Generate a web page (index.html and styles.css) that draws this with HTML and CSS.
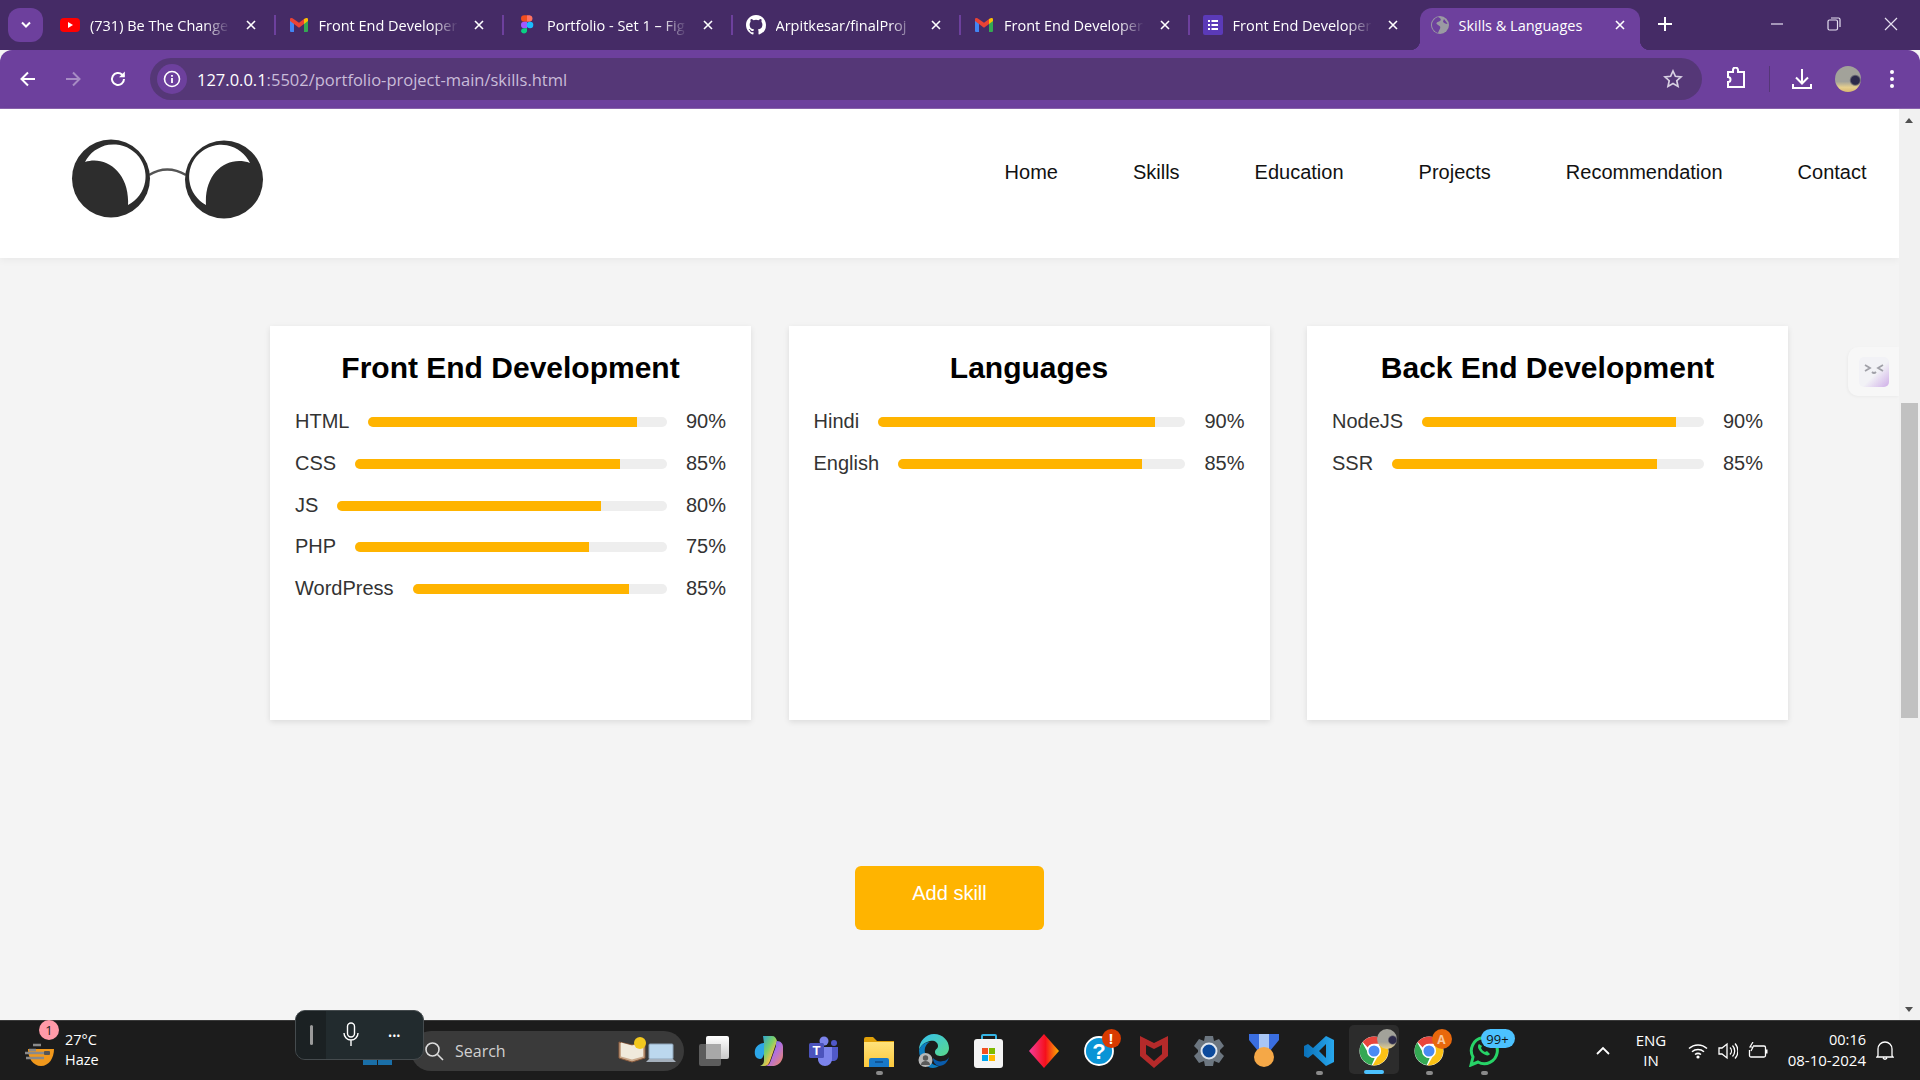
FILE: index.html
```html
<!DOCTYPE html>
<html lang="en">
<head>
    <meta charset="UTF-8">
    <meta name="viewport" content="width=device-width, initial-scale=1.0">
    <title>Skills &amp; Languages</title>
    <link rel="stylesheet" href="styles.css">
</head>
<body>
    <!-- shared icons -->
    <svg class="icon-defs" aria-hidden="true">
        <defs>
            <linearGradient id="grad-diamond" x1="0" y1="0" x2="1" y2="0">
                <stop offset="0" stop-color="#f53c9c"/>
                <stop offset="0.55" stop-color="#f5101c"/>
                <stop offset="1" stop-color="#fbb000"/>
            </linearGradient>
            <linearGradient id="grad-copilot" x1="0" y1="0" x2="1" y2="1">
                <stop offset="0" stop-color="#1c9be8"/>
                <stop offset="0.45" stop-color="#7ad06a"/>
                <stop offset="0.7" stop-color="#f5c24a"/>
                <stop offset="1" stop-color="#ee5a8e"/>
            </linearGradient>
            <linearGradient id="grad-copilot2" x1="0" y1="0" x2="1" y2="1">
                <stop offset="0" stop-color="#2e7ee0"/>
                <stop offset="0.5" stop-color="#b070e0"/>
                <stop offset="1" stop-color="#f58a5a"/>
            </linearGradient>
            <linearGradient id="grad-edge" x1="0" y1="0" x2="1" y2="1">
                <stop offset="0" stop-color="#35c1f1"/>
                <stop offset="1" stop-color="#5ad88a"/>
            </linearGradient>
            <linearGradient id="grad-front" x1="0" y1="0" x2="0" y2="1">
                <stop offset="0" stop-color="#ffffff"/>
                <stop offset="1" stop-color="#c9c9c9"/>
            </linearGradient>
            <linearGradient id="grad-folder" x1="0" y1="0" x2="0" y2="1">
                <stop offset="0" stop-color="#ffe27a"/>
                <stop offset="1" stop-color="#fcc83c"/>
            </linearGradient>
            <linearGradient id="grad-vscode" x1="0" y1="0" x2="1" y2="0">
                <stop offset="0" stop-color="#0a70b8"/>
                <stop offset="1" stop-color="#28a8ee"/>
            </linearGradient>
            <symbol id="i-close" viewBox="0 0 12 12">
                <path d="M2 2l8 8M10 2l-8 8" fill="none" stroke="#fff" stroke-width="1.6"/>
            </symbol>
            <symbol id="i-gmail" viewBox="0 0 20 16">
                <path d="M1 15V3l4 3v9H2a1 1 0 0 1-1-1z" fill="#4285f4"/>
                <path d="M19 15V3l-4 3v9h3a1 1 0 0 0 1-1z" fill="#34a853"/>
                <path d="M15 2v5l4-3V2.5a1.5 1.5 0 0 0-2.5-1.2z" fill="#fbbc04"/>
                <path d="M1 2.5V4l4 3 5 3.7L15 7V2l-5 3.7L3.5 1.3A1.5 1.5 0 0 0 1 2.5z" fill="#ea4335"/>
            </symbol>
            <symbol id="i-chrome" viewBox="0 0 32 32">
                <circle cx="16" cy="16" r="15.5" fill="#fff"/>
                <path d="M16 .5a15.5 15.5 0 0 1 13.4 7.75H16a7.75 7.75 0 0 0-6.7 3.9L3.9 6.5A15.5 15.5 0 0 1 16 .5z" fill="#e8453c"/>
                <path d="M3.4 7l6.7 11.6a7.75 7.75 0 0 0 6.6 5.1L13.5 31A15.5 15.5 0 0 1 3.4 7z" fill="#34a853"/>
                <path d="M29.8 9.5A15.5 15.5 0 0 1 14.5 31.4l6.7-11.6a7.75 7.75 0 0 0 .1-10.3z" fill="#fbc116"/>
                <circle cx="16" cy="16" r="6.7" fill="#4a8af4" stroke="#fff" stroke-width="1.6"/>
            </symbol>
        </defs>
    </svg>

    <div class="tab-strip">
        <button class="tab-search">
            <svg width="12" height="8" viewBox="0 0 12 8"><path d="M2 1.5l4 4 4-4" fill="none" stroke="#fff" stroke-width="2"/></svg>
        </button>

        <div class="tab">
            <svg class="favicon" width="20" height="20" viewBox="0 0 20 20"><rect y="3" width="20" height="14" rx="4" fill="#f00"/><path d="M8 7l5 3-5 3z" fill="#fff"/></svg>
            <span class="tab-title">(731) Be The Change</span>
            <svg class="tab-close"><use href="#i-close"/></svg>
        </div>
        <div class="tab">
            <svg class="favicon" width="20" height="20"><use href="#i-gmail"/></svg>
            <span class="tab-title">Front End Developer</span>
            <svg class="tab-close"><use href="#i-close"/></svg>
        </div>
        <div class="tab">
            <svg class="favicon" width="20" height="20" viewBox="0 0 14 20">
                <path d="M1 3.5A3.3 3.3 0 0 1 4.3.2H7v6.5H4.3A3.3 3.3 0 0 1 1 3.5z" fill="#f24e1e"/>
                <path d="M7 .2h2.7a3.3 3.3 0 0 1 0 6.5H7z" fill="#ff7262"/>
                <path d="M1 10A3.3 3.3 0 0 1 4.3 6.7H7v6.6H4.3A3.3 3.3 0 0 1 1 10z" fill="#a259ff"/>
                <circle cx="10" cy="10" r="3.3" fill="#1abcfe"/>
                <path d="M1 16.5a3.3 3.3 0 0 1 3.3-3.2H7v3.2a3.3 3.3 0 0 1-6 0z" fill="#0acf83"/>
            </svg>
            <span class="tab-title">Portfolio - Set 1 – Fig</span>
            <svg class="tab-close"><use href="#i-close"/></svg>
        </div>
        <div class="tab">
            <svg class="favicon" width="20" height="20" viewBox="0 0 16 16"><path fill="#fff" d="M8 0C3.58 0 0 3.58 0 8c0 3.54 2.29 6.53 5.47 7.59.4.07.55-.17.55-.38 0-.19-.01-.82-.01-1.49-2.01.37-2.53-.49-2.69-.94-.09-.23-.48-.94-.82-1.13-.28-.15-.68-.52-.01-.53.63-.01 1.08.58 1.23.82.72 1.21 1.87.87 2.33.66.07-.52.28-.87.51-1.07-1.78-.2-3.64-.89-3.64-3.95 0-.87.31-1.59.82-2.15-.08-.2-.36-1.02.08-2.12 0 0 .67-.21 2.2.82a7.42 7.42 0 0 1 4 0c1.53-1.04 2.2-.82 2.2-.82.44 1.1.16 1.92.08 2.12.51.56.82 1.27.82 2.15 0 3.07-1.87 3.75-3.65 3.95.29.25.54.73.54 1.48 0 1.07-.01 1.93-.01 2.2 0 .21.15.46.55.38A8.01 8.01 0 0 0 16 8c0-4.42-3.58-8-8-8z"/></svg>
            <span class="tab-title">Arpitkesar/finalProj</span>
            <svg class="tab-close"><use href="#i-close"/></svg>
        </div>
        <div class="tab">
            <svg class="favicon" width="20" height="20"><use href="#i-gmail"/></svg>
            <span class="tab-title">Front End Developer</span>
            <svg class="tab-close"><use href="#i-close"/></svg>
        </div>
        <div class="tab tab-last">
            <svg class="favicon" width="20" height="20" viewBox="0 0 20 20"><rect width="20" height="20" rx="2" fill="#5b3ab8"/><path d="M5 5h2v2H5zM5 9h2v2H5zM5 13h2v2H5zM8.5 5H15v2H8.5zM8.5 9H15v2H8.5zM8.5 13H15v2H8.5z" fill="#fff"/></svg>
            <span class="tab-title">Front End Developer</span>
            <svg class="tab-close"><use href="#i-close"/></svg>
        </div>
        <div class="tab tab-active">
            <svg class="favicon" width="18" height="18" viewBox="0 0 18 18"><circle cx="9" cy="9" r="9" fill="#9a9aa2"/><path d="M7 1c2 1 3.5 2 2.5 3.5S6 5.5 5.5 7 8 9 9 10.5 8 14 7 17C4 16 1 13 1 9s3-7 6-8zM13 3c1 2 3 3 3.5 5-2 0-4-1-4.5-2.5z" fill="#6d409d"/></svg>
            <span class="tab-title">Skills &amp; Languages</span>
            <svg class="tab-close"><use href="#i-close"/></svg>
        </div>
        <svg class="new-tab" width="14" height="14" viewBox="0 0 14 14"><path d="M7 0v14M0 7h14" stroke="#fff" stroke-width="2"/></svg>

        <div class="window-controls">
            <div class="win-btn"><svg width="12" height="12" viewBox="0 0 12 12"><path d="M0 6h12" stroke="#e6dff0" stroke-width="1.2"/></svg></div>
            <div class="win-btn"><svg width="14" height="14" viewBox="0 0 14 14"><rect x="1" y="3" width="9.5" height="10" rx="1.5" fill="none" stroke="#e6dff0" stroke-width="1.2"/><path d="M4 1h7.5A1.5 1.5 0 0 1 13 2.5V10" fill="none" stroke="#e6dff0" stroke-width="1.2"/></svg></div>
            <div class="win-btn win-close"><svg width="14" height="14" viewBox="0 0 14 14"><path d="M1 1l12 12M13 1L1 13" stroke="#e6dff0" stroke-width="1.2"/></svg></div>
        </div>
    </div>

    <div class="toolbar">
        <button class="nav-btn">
            <svg width="18" height="18" viewBox="0 0 18 18"><path d="M16 9H3M9 2.5L2.5 9 9 15.5" fill="none" stroke="#fff" stroke-width="2"/></svg>
        </button>
        <button class="nav-btn">
            <svg width="18" height="18" viewBox="0 0 18 18"><path d="M2 9h13M9 2.5L15.5 9 9 15.5" fill="none" stroke="#a78cc4" stroke-width="2"/></svg>
        </button>
        <button class="nav-btn">
            <svg width="18" height="18" viewBox="0 0 18 18"><path d="M15 9a6 6 0 1 1-1.8-4.3L15 6.5" fill="none" stroke="#fff" stroke-width="2"/><path d="M15.8 1.5v5.8H10z" fill="#fff"/></svg>
        </button>

        <div class="omnibox">
            <span class="site-info">
                <svg width="18" height="18" viewBox="0 0 18 18"><circle cx="9" cy="9" r="7.5" fill="none" stroke="#fff" stroke-width="1.6"/><path d="M9 8v5M9 5v1.8" stroke="#fff" stroke-width="1.8"/></svg>
            </span>
            <span class="url"><span class="url-host">127.0.0.1</span>:5502/portfolio-project-main/skills.html</span>
            <svg class="star" width="20" height="20" viewBox="0 0 20 20"><path d="M10 2l2.4 5.3 5.6.6-4.2 3.8 1.2 5.7L10 14.5l-5 2.9 1.2-5.7L2 7.9l5.6-.6z" fill="none" stroke="#d8d0e2" stroke-width="1.7"/></svg>
        </div>

        <div class="tool tool-first">
            <svg width="22" height="24" viewBox="0 0 22 24"><path d="M3 5h5V3a2 2 0 0 1 5 0v2h6v15H3v-5a2.5 2.5 0 0 0 0-5z" fill="none" stroke="#fff" stroke-width="2"/></svg>
        </div>
        <span class="tool-sep"></span>
        <div class="tool">
            <svg width="22" height="24" viewBox="0 0 22 24"><path d="M11 2v14M5 10.5l6 6 6-6M2 17v4h18v-4" fill="none" stroke="#fff" stroke-width="2"/></svg>
        </div>
        <div class="tool tool-avatar"><span class="avatar"></span></div>
        <div class="tool">
            <svg width="6" height="20" viewBox="0 0 6 20"><circle cx="3" cy="3" r="2" fill="#fff"/><circle cx="3" cy="10" r="2" fill="#fff"/><circle cx="3" cy="17" r="2" fill="#fff"/></svg>
        </div>
    </div>

    <div class="viewport">
        <main class="page">
            <header class="site-header">
                <svg class="logo" width="196" height="82" viewBox="70 138 196 82">
                    <path d="M149 175Q167 164 186 175" fill="none" stroke="#555" stroke-width="2.5"/>
                    <circle cx="111" cy="178.5" r="39" fill="#2d2d2d"/>
                    <circle cx="224" cy="179.5" r="39" fill="#2d2d2d"/>
                    <path d="M85 162A32 32 0 1 1 128 205C130 172 105 155 85 162z" fill="#fff"/>
                    <path d="M250 163A32 32 0 1 0 206 205C204 172 228 155 250 163z" fill="#fff"/>
                </svg>
                <nav class="site-nav">
                    <a href="#">Home</a>
                    <a href="#">Skills</a>
                    <a href="#">Education</a>
                    <a href="#">Projects</a>
                    <a href="#">Recommendation</a>
                    <a href="#">Contact</a>
                </nav>
            </header>

            <section class="skills-grid">
                <div class="skill-card">
                    <h2>Front End Development</h2>
                    <div class="skill-row"><span>HTML</span><div class="bar"><div class="bar-fill" style="width: 90%"></div></div><span>90%</span></div>
                    <div class="skill-row"><span>CSS</span><div class="bar"><div class="bar-fill" style="width: 85%"></div></div><span>85%</span></div>
                    <div class="skill-row"><span>JS</span><div class="bar"><div class="bar-fill" style="width: 80%"></div></div><span>80%</span></div>
                    <div class="skill-row"><span>PHP</span><div class="bar"><div class="bar-fill" style="width: 75%"></div></div><span>75%</span></div>
                    <div class="skill-row"><span>WordPress</span><div class="bar"><div class="bar-fill" style="width: 85%"></div></div><span>85%</span></div>
                </div>
                <div class="skill-card">
                    <h2>Languages</h2>
                    <div class="skill-row"><span>Hindi</span><div class="bar"><div class="bar-fill" style="width: 90%"></div></div><span>90%</span></div>
                    <div class="skill-row"><span>English</span><div class="bar"><div class="bar-fill" style="width: 85%"></div></div><span>85%</span></div>
                </div>
                <div class="skill-card">
                    <h2>Back End Development</h2>
                    <div class="skill-row"><span>NodeJS</span><div class="bar"><div class="bar-fill" style="width: 90%"></div></div><span>90%</span></div>
                    <div class="skill-row"><span>SSR</span><div class="bar"><div class="bar-fill" style="width: 85%"></div></div><span>85%</span></div>
                </div>
            </section>

            <div class="add-skill-wrap">
                <button class="add-skill">Add skill</button>
            </div>
        </main>

        <div class="scrollbar">
            <span class="arrow-up"></span>
            <div class="thumb"></div>
            <span class="arrow-down"></span>
        </div>

        <!-- extension widget stuck to the right edge -->
        <div class="side-widget">
            <div class="side-face">
                <svg width="20" height="12" viewBox="0 0 20 12"><path d="M1 2l5 3-5 3M19 2l-5 3 5 3M8 9q2 2 4 0" fill="none" stroke="#a0a0a8" stroke-width="1.8"/></svg>
            </div>
        </div>
    </div>

    <footer class="taskbar">
        <div class="weather">
            <svg class="weather-icon" width="30" height="34" viewBox="0 0 30 34">
                <path d="M3 15h26c0 9-5 17-13 17S3 24 3 15z" fill="#f0981c"/>
                <path d="M4 16h7M8 11h8M0 19h24M1 24h18" stroke="#8a8a8a" stroke-width="2.6"/>
                <rect x="19" y="17" width="6" height="4" rx="1" fill="#555"/>
            </svg>
            <span class="weather-badge">1</span>
            <div class="weather-text">
                <span>27°C</span>
                <span>Haze</span>
            </div>
        </div>

        <svg class="start" width="30" height="30" viewBox="0 0 30 30">
            <path d="M0 0h14v14H0zM15 0h14v14H15zM0 15h14v14H0zM15 15h14v14H15z" fill="#1a6fa8"/>
        </svg>

        <div class="search-pill">
            <svg width="20" height="20" viewBox="0 0 20 20"><circle cx="8.5" cy="8.5" r="6.5" fill="none" stroke="#ddd" stroke-width="1.6"/><path d="M13.5 13.5L19 19" stroke="#ddd" stroke-width="1.6"/></svg>
            <span class="search-label">Search</span>
            <svg class="search-art" width="58" height="30" viewBox="0 0 58 30">
                <path d="M1 6l13 3 13-3v16l-13 4-13-4z" fill="#c9a98c" stroke="#8a5a3c"/>
                <path d="M3 6.5l11 3 11-3v14l-11 3-11-3z" fill="#f0eadc"/>
                <circle cx="22" cy="7" r="6" fill="#f3c81e"/>
                <rect x="31" y="8" width="24" height="15" rx="1" fill="#bcd8ee" stroke="#8ea4b8"/>
                <path d="M28 26h30l-3-3H31z" fill="#a5b0bc"/>
            </svg>
        </div>

        <div class="app-icons">
            <div class="app">
                <svg width="30" height="30" viewBox="0 0 30 30">
                    <rect y="8" width="22" height="22" rx="2" fill="#5c5c5c"/>
                    <rect x="7" y="0" width="23" height="23" rx="2" fill="url(#grad-front)"/>
                    <rect x="7" y="8" width="15" height="15" fill="#a8a8a8"/>
                </svg>
            </div>
            <div class="app">
                <svg width="30" height="32" viewBox="0 0 30 32">
                    <path d="M9 1h9c3 0 4 2 5 5l-7 20c-1 3-3 5-6 5H6c3-1 4-3 4-6V8z" fill="url(#grad-copilot)"/>
                    <path d="M23 6c4 0 6 3 6 6v8c0 6-4 10-9 11h-8c3-1 4-3 5-6l5-14c0-3 0-4 1-5z" fill="url(#grad-copilot2)"/>
                    <path d="M10 8c-4 0-8 3-9 7-1 5 1 9 5 9 2 0 3-2 4-5z" fill="#2ca6e8"/>
                </svg>
            </div>
            <div class="app">
                <svg width="30" height="30" viewBox="0 0 30 30">
                    <circle cx="15" cy="5" r="4.5" fill="#7b83eb"/>
                    <circle cx="25" cy="7" r="3" fill="#5059c9"/>
                    <path d="M21 11h8v9c0 3-2 5-5 5h-3z" fill="#5059c9"/>
                    <path d="M9 11h14v12c0 4-3 7-7 7s-7-3-7-7z" fill="#7b83eb"/>
                    <rect y="7" width="15" height="15" rx="1.5" fill="#4b53bc"/>
                    <text x="7.5" y="19" class="teams-t">T</text>
                </svg>
            </div>
            <div class="app app-open">
                <svg width="30" height="32" viewBox="0 0 30 32">
                    <path d="M0 4a2 2 0 0 1 2-2h7l4 4h17v4H0z" fill="#e0a008"/>
                    <path d="M0 7h30v25H0z" fill="url(#grad-folder)"/>
                    <path d="M5 25a2 2 0 0 1 2-2h16a2 2 0 0 1 2 2v7H5z" fill="#1878c8"/>
                    <path d="M11 27h8" stroke="#0c4a88" stroke-width="1.5"/>
                </svg>
            </div>
            <div class="app">
                <svg width="32" height="36" viewBox="0 0 32 36">
                    <path d="M1 17C1 8 8 1 16 1c9 0 15 7 15 14 0 5-4 8-8 8-3 0-6-1-6-4 0-3 3-3 3-6 0-4-4-6-8-5-5 1-9 4-11 9z" fill="url(#grad-edge)"/>
                    <path d="M1 17c2-5 6-8 11-8-4 2-6 6-5 11 1 6 6 12 14 13-2 1-4 2-6 2C8 35 1 27 1 17z" fill="#0c7dc0"/>
                    <path d="M21 33c-4-1-6-4-6-8 3 3 7 4 10 3 3 0 5-2 6-4-1 5-5 9-10 9z" fill="#0a5cac"/>
                    <circle cx="7.5" cy="27" r="7" fill="#b8b8b8"/>
                    <circle cx="7.5" cy="25" r="2.7" fill="#5a5a5a"/>
                    <path d="M3 32c0-3 2-4 4.5-4s4.5 1 4.5 4z" fill="#5a5a5a"/>
                </svg>
            </div>
            <div class="app">
                <svg width="30" height="34" viewBox="0 0 30 34">
                    <path d="M8 6V2a1 1 0 0 1 1-1h12a1 1 0 0 1 1 1v4" fill="none" stroke="#35b5e5" stroke-width="2"/>
                    <rect y="5" width="29" height="29" rx="3" fill="#f4f4f4"/>
                    <path d="M8 14h6v6H8z" fill="#f25022"/><path d="M15 14h6v6h-6z" fill="#7fba00"/>
                    <path d="M8 21h6v6H8z" fill="#00a4ef"/><path d="M15 21h6v6h-6z" fill="#ffb900"/>
                </svg>
            </div>
            <div class="app">
                <svg width="30" height="34" viewBox="0 0 30 34"><path d="M15 0l15 17-15 17L0 17z" fill="url(#grad-diamond)"/></svg>
            </div>
            <div class="app">
                <svg width="30" height="30" viewBox="0 0 30 30">
                    <circle cx="15" cy="15" r="14" fill="#0a94d6" stroke="#fff" stroke-width="1.8"/>
                    <text x="15" y="23" class="help-q">?</text>
                </svg>
                <span class="app-badge badge-alert">!</span>
            </div>
            <div class="app">
                <svg width="28" height="34" viewBox="0 0 28 34"><path d="M0 2l14 7 14-7v20L14 34 0 22z" fill="#b52a2a"/><path d="M6 11l8 4 8-4v9l-8 7-8-7z" fill="#1c1c1c"/></svg>
            </div>
            <div class="app">
                <svg width="30" height="32" viewBox="0 0 30 32">
                    <path d="M11 1h8l1 5 5-2 5 7-4 4v2l4 4-5 7-5-2-1 5h-8l-1-5-5 2-5-7 4-4v-2L0 11l5-7 5 2z" fill="#6c7680"/>
                    <circle cx="15" cy="16" r="7.5" fill="#0c4a9c" stroke="#dfe6ee" stroke-width="2"/>
                </svg>
            </div>
            <div class="app">
                <svg width="30" height="34" viewBox="0 0 30 34">
                    <path d="M0 0h30v6l-9 11H9L0 6z" fill="#3a6ee0"/>
                    <path d="M10 0h10v17H10z" fill="#a9c6f5"/>
                    <circle cx="15" cy="23" r="10" fill="#f5a847"/>
                </svg>
            </div>
            <div class="app app-open">
                <svg width="30" height="30" viewBox="0 0 30 30">
                    <path d="M22 0l8 4v22l-8 4L9 18l-5 4-4-2V10l4-2 5 4zM22 8l-7 7 7 7z" fill="url(#grad-vscode)"/>
                </svg>
            </div>
            <div class="app app-active">
                <svg width="30" height="30"><use href="#i-chrome"/></svg>
                <span class="app-badge badge-avatar"></span>
            </div>
            <div class="app app-open">
                <svg width="30" height="30"><use href="#i-chrome"/></svg>
                <span class="app-badge badge-orange">A</span>
            </div>
            <div class="app app-open">
                <svg width="30" height="32" viewBox="0 0 30 32">
                    <path d="M2 30l2-8A13 13 0 1 1 9 27z" fill="none" stroke="#27d367" stroke-width="3"/>
                    <path d="M10 9c-2 2-1 6 3 9s7 3 8 1l-3-3-2 1c-2-1-3-2-4-4l1-2z" fill="#27d367"/>
                </svg>
                <span class="app-badge badge-count">99+</span>
            </div>
        </div>

        <div class="tray">
            <div class="tray-icon">
                <svg width="14" height="9" viewBox="0 0 14 9"><path d="M1 8l6-6 6 6" fill="none" stroke="#fff" stroke-width="1.8"/></svg>
            </div>
            <div class="tray-lang"><span>ENG</span><span>IN</span></div>
            <div class="tray-icon tray-wifi">
                <svg width="20" height="16" viewBox="0 0 20 16"><path d="M1 5.5a13 13 0 0 1 18 0M4 8.7a9 9 0 0 1 12 0M7 11.5a5 5 0 0 1 6 0" fill="none" stroke="#fff" stroke-width="1.5"/><circle cx="10" cy="14" r="1.6" fill="#fff"/></svg>
            </div>
            <div class="tray-icon">
                <svg width="20" height="18" viewBox="0 0 20 18"><path d="M1 6h3l5-4v14l-5-4H1z" fill="none" stroke="#fff" stroke-width="1.3"/><path d="M12 5.5a5 5 0 0 1 0 7M14.5 3.5a8 8 0 0 1 0 11M17 1.5a11 11 0 0 1 0 15" fill="none" stroke="#fff" stroke-width="1.3"/></svg>
            </div>
            <div class="tray-icon">
                <svg width="20" height="18" viewBox="0 0 20 18"><path d="M5 4h11a1.5 1.5 0 0 1 1.5 1.5v8A1.5 1.5 0 0 1 16 15H3a1.5 1.5 0 0 1-1.5-1.5V8" fill="none" stroke="#fff" stroke-width="1.3"/><path d="M18 7.5h1.5v4H18z" fill="#fff"/><path d="M5 0L2 5h3l-2 4" fill="none" stroke="#fff" stroke-width="1.2"/></svg>
            </div>
            <div class="tray-clock"><span class="tray-time">00:16</span><span>08-10-2024</span></div>
            <div class="tray-icon tray-bell">
                <svg width="18" height="20" viewBox="0 0 18 20"><path d="M2 14.5V8a7 7 0 0 1 14 0v6.5l1 1.5H1zM7 17q2 2.5 4 0" fill="none" stroke="#fff" stroke-width="1.3"/></svg>
            </div>
        </div>

        <!-- voice typing pill floats over the start button -->
        <div class="voice-pill">
            <div class="voice-grip"><span></span></div>
            <svg class="voice-mic" width="16" height="26" viewBox="0 0 16 26"><rect x="4.5" y="1" width="7" height="14" rx="3.5" fill="none" stroke="#fff" stroke-width="1.4"/><path d="M1 11a7 7 0 0 0 14 0M8 18v6" fill="none" stroke="#fff" stroke-width="1.4"/></svg>
            <span class="voice-dots">•••</span>
        </div>
    </footer>
</body>
</html>
```

FILE: styles.css
```css
/* Global */
* {
    box-sizing: border-box;
}

html, body {
    margin: 0;
    padding: 0;
    height: 1080px;
    overflow: hidden;
}

body {
    font-family: 'Liberation Sans', Arial, sans-serif;
    background: #f4f4f4;
    color: #111;
}

button {
    font-family: inherit;
    border: none;
    background: none;
    padding: 0;
}

.icon-defs {
    position: absolute;
    width: 0;
    height: 0;
}

/* Browser tab strip */
.tab-strip {
    display: flex;
    align-items: flex-end;
    height: 50px;
    padding-left: 8px;
    background: #452b66;
    font-family: 'Open Sans', 'Noto Sans', sans-serif;
    font-size: 14.5px;
    color: #fff;
}

.tab-search {
    display: flex;
    align-items: center;
    justify-content: center;
    width: 35px;
    height: 34px;
    margin-right: 4px;
    margin-bottom: 8px;
    border-radius: 12px;
    background: #6d409d;
}

.tab {
    position: relative;
    display: flex;
    align-items: center;
    flex: none;
    width: 228.5px;
    height: 42px;
    padding: 0 19px 8px 13px;
}

.tab::after {
    content: '';
    position: absolute;
    right: 0;
    top: 7px;
    width: 2px;
    height: 20px;
    background: #6d409d;
}

.tab-last::after {
    display: none;
}

.favicon {
    flex: none;
}

.tab-title {
    flex: 1;
    min-width: 0;
    margin: 0 9px 0 10px;
    white-space: nowrap;
    -webkit-mask-image: linear-gradient(to right, #000 78%, transparent 96%);
    mask-image: linear-gradient(to right, #000 78%, transparent 96%);
}

.tab-close {
    flex: none;
    width: 12px;
    height: 12px;
}

.tab-active {
    width: 220px;
    margin-left: 1.5px;
    padding: 0 14px 8px 11px;
    background: #6d409d;
    border-radius: 12px 12px 0 0;
}

.tab-active .tab-title {
    -webkit-mask-image: none;
    mask-image: none;
}

/* little flares where the active tab meets the toolbar */
.tab-active::before,
.tab-active::after {
    content: '';
    position: absolute;
    top: auto;
    bottom: 0;
    width: 10px;
    height: 10px;
}

.tab-active::before {
    left: -10px;
    background: radial-gradient(circle at 0 0, transparent 10px, #6d409d 10.5px);
}

.tab-active::after {
    right: -10px;
    background: radial-gradient(circle at 100% 0, transparent 10px, #6d409d 10.5px);
}

.new-tab {
    flex: none;
    margin: 0 0 19px 18px;
}

.window-controls {
    display: flex;
    height: 50px;
    margin-left: auto;
}

.win-btn {
    display: flex;
    align-items: center;
    justify-content: center;
    width: 57px;
    height: 50px;
    padding-bottom: 2px;
}

.win-close {
    width: 58px;
}

/* Browser toolbar */
.toolbar {
    display: flex;
    align-items: flex-start;
    height: 59px;
    padding: 8px 0 0 5px;
    background: #6d409d;
    border-radius: 12px 12px 0 0;
    border-bottom: 1px solid #8a63ad;
    font-family: 'Open Sans', 'Noto Sans', sans-serif;
}

.nav-btn,
.tool {
    display: flex;
    align-items: center;
    justify-content: center;
    width: 45px;
    height: 42px;
}

.omnibox {
    display: flex;
    align-items: center;
    width: 1552px;
    height: 42px;
    margin-left: 10px;
    padding: 0 19px 0 7px;
    background: #553777;
    border-radius: 21px;
    color: #c9bcd9;
    font-size: 16.5px;
}

.site-info {
    display: flex;
    align-items: center;
    justify-content: center;
    width: 30px;
    height: 30px;
    border-radius: 50%;
    background: #6d409d;
}

.url {
    margin-left: 10px;
}

.url-host {
    color: #fff;
}

.star {
    margin-left: auto;
}

.tool {
    width: 44px;
}

.tool-first {
    margin-left: 12px;
}

.tool-sep {
    width: 1px;
    height: 26px;
    margin: 8px 10.5px 0;
    background: #553777;
}

.tool-avatar {
    margin-left: 2px;
}

.avatar {
    width: 26px;
    height: 26px;
    border-radius: 50%;
    background:
        radial-gradient(circle at 78% 55%, #2c2a4a 0 16%, transparent 24%),
        linear-gradient(to bottom, #a2a29a 0 60%, #e6cf8e 82%, #d8b870);
}

/* Page viewport */
.viewport {
    position: relative;
    display: flex;
    height: 911px;
    background: #f4f4f4;
}

.page {
    flex: 1;
    min-width: 0;
}

.site-header {
    display: flex;
    justify-content: space-between;
    align-items: flex-start;
    height: 149px;
    padding: 0 32.5px 0 70px;
    background: #fff;
    box-shadow: 0 2px 8px rgba(0, 0, 0, 0.05);
}

.logo {
    margin-top: 29px;
}

.site-nav {
    display: flex;
    gap: 75px;
    margin-top: 50px;
}

.site-nav a {
    font-size: 20px;
    line-height: 26px;
    color: #111;
    text-decoration: none;
}

/* Skill cards */
.skills-grid {
    display: grid;
    grid-template-columns: repeat(3, 1fr);
    gap: 37.5px;
    padding: 68px 111px 0 270px;
}

.skill-card {
    height: 394px;
    padding: 25px;
    background: #fff;
    box-shadow: 0 2px 6px rgba(0, 0, 0, 0.1);
}

.skill-card h2 {
    margin: 0 0 25px;
    font-size: 30px;
    line-height: 34px;
    font-weight: bold;
    text-align: center;
    color: #000;
}

.skill-row {
    display: flex;
    align-items: center;
    height: 23px;
    margin-bottom: 18.8px;
    font-size: 20px;
    color: #333;
}

.bar {
    flex: 1;
    height: 10px;
    margin: 1px 19px 0;
    background: #eee;
    border-radius: 5px;
}

.bar-fill {
    height: 100%;
    background: #ffb400;
    border-radius: 5px 0 0 5px;
}

.add-skill-wrap {
    display: flex;
    justify-content: center;
    margin-top: 146px;
}

.add-skill {
    width: 189px;
    height: 64px;
    padding: 0 0 10px;
    background: #ffb400;
    border-radius: 6px;
    color: #fff;
    font-size: 20px;
}

/* Scrollbar */
.scrollbar {
    position: relative;
    flex: none;
    width: 21px;
    background: #f1f1f1;
}

.thumb {
    position: absolute;
    left: 2px;
    top: 294px;
    width: 17px;
    height: 315px;
    background: #c1c1c1;
}

.arrow-up,
.arrow-down {
    position: absolute;
    left: 6px;
    width: 0;
    height: 0;
    border-left: 4.5px solid transparent;
    border-right: 4.5px solid transparent;
}

.arrow-up {
    top: 9px;
    border-bottom: 5px solid #505050;
}

.arrow-down {
    bottom: 8px;
    border-top: 5px solid #505050;
}

.side-widget {
    position: absolute;
    right: 21px;
    top: 238px;
    display: flex;
    align-items: center;
    width: 51px;
    height: 49px;
    padding-left: 11px;
    background: #f7f7f7;
    border-radius: 10px 0 0 10px;
    box-shadow: -1px 1px 3px rgba(0, 0, 0, 0.04);
}

.side-face {
    display: flex;
    align-items: center;
    justify-content: center;
    width: 30px;
    height: 30px;
    padding-bottom: 6px;
    border-radius: 5px;
    background: linear-gradient(135deg, #f2f2f6 55%, #cfaee8);
}

/* Windows taskbar */
.taskbar {
    position: relative;
    display: flex;
    align-items: center;
    height: 60px;
    background: #1c1c1c;
    border-top: 1px solid #3a3a3a;
    font-family: 'Open Sans', 'Noto Sans', sans-serif;
    color: #fff;
}

.weather {
    position: relative;
    display: flex;
    align-items: center;
    flex: none;
    width: 363px;
    padding-left: 25px;
}

.weather-badge {
    position: absolute;
    left: 39px;
    top: -12px;
    width: 20px;
    height: 20px;
    border-radius: 50%;
    background: #ff9aa8;
    color: #222;
    font-size: 13px;
    line-height: 20px;
    text-align: center;
}

.weather-text {
    display: flex;
    flex-direction: column;
    margin: -2px 0 0 10px;
    font-size: 14.5px;
    line-height: 20px;
}

.start {
    flex: none;
}

.search-pill {
    display: flex;
    align-items: center;
    flex: none;
    width: 273px;
    height: 40px;
    margin-left: 18px;
    padding: 0 8px 0 13px;
    border-radius: 20px;
    background: #3a3a3a;
}

.search-label {
    margin-left: 11px;
    font-size: 16px;
    color: #d0d0d0;
}

.search-art {
    margin-left: auto;
}

.app-icons {
    display: flex;
    flex: none;
    margin-left: 2.5px;
}

.app {
    position: relative;
    display: flex;
    align-items: center;
    justify-content: center;
    width: 55px;
    height: 59px;
}

.app-open::after,
.app-active::after {
    content: '';
    position: absolute;
    left: 24px;
    bottom: 5px;
    width: 7px;
    height: 4px;
    border-radius: 2px;
    background: #8a8a8a;
}

.app-active::before {
    content: '';
    position: absolute;
    left: 2.5px;
    top: 4px;
    width: 50px;
    height: 49px;
    border-radius: 5px;
    background: #2c2c2c;
}

.app-active svg {
    position: relative;
}

.app-active::after {
    left: 17.5px;
    bottom: 6px;
    width: 20px;
    background: #4cc2ff;
}

.app-badge {
    position: absolute;
    display: flex;
    align-items: center;
    justify-content: center;
}

.badge-alert {
    left: 30px;
    top: 8px;
    width: 19px;
    height: 19px;
    border-radius: 50%;
    background: #d83b01;
    font-size: 14px;
    font-weight: bold;
}

.badge-avatar {
    left: 30px;
    top: 8px;
    width: 20px;
    height: 20px;
    border-radius: 50%;
    background:
        radial-gradient(circle at 78% 55%, #2c2a4a 0 18%, transparent 26%),
        linear-gradient(to bottom, #a2a29a 0 65%, #e6cf8e);
}

.badge-orange {
    left: 30px;
    top: 8px;
    width: 20px;
    height: 20px;
    border-radius: 50%;
    background: #e8680c;
    color: #f8c8a0;
    font-size: 12px;
    font-weight: bold;
}

.badge-count {
    left: 24px;
    top: 8px;
    width: 34px;
    height: 19px;
    border-radius: 10px;
    background: #4cc2ff;
    color: #111;
    font-size: 13px;
}

.teams-t {
    font-family: 'Liberation Sans', Arial, sans-serif;
    font-size: 13px;
    font-weight: bold;
    fill: #fff;
    text-anchor: middle;
}

.help-q {
    font-family: 'Liberation Sans', Arial, sans-serif;
    font-size: 22px;
    font-weight: bold;
    fill: #fff;
    text-anchor: middle;
}

/* Tray */
.tray {
    display: flex;
    align-items: center;
    margin-left: auto;
    padding-right: 20px;
    font-size: 15px;
    line-height: 20px;
}

.tray-icon {
    display: flex;
    align-items: center;
    justify-content: center;
    width: 30px;
    height: 40px;
}

.tray-lang {
    display: flex;
    flex-direction: column;
    align-items: center;
    width: 60px;
    margin: -2px 0 0 3px;
}

.tray-wifi {
    margin-left: 2px;
}

.tray-clock {
    display: flex;
    flex-direction: column;
    align-items: flex-end;
    width: 90px;
    margin: -2px 0 0 3px;
}

.tray-time {
    font-size: 14.5px;
}

.tray-bell {
    margin-left: 4px;
}

/* Voice typing pill */
.voice-pill {
    position: absolute;
    left: 295px;
    top: -11px;
    display: flex;
    align-items: center;
    width: 129px;
    height: 50px;
    background: #222b2e;
    border: 1px solid #454b4e;
    border-radius: 10px;
    overflow: hidden;
}

.voice-grip {
    display: flex;
    align-items: center;
    justify-content: center;
    width: 30px;
    height: 100%;
    background: #1b2123;
}

.voice-grip span {
    width: 3px;
    height: 20px;
    border-radius: 2px;
    background: #9a9a9a;
}

.voice-mic {
    margin-left: 17px;
}

.voice-dots {
    margin-left: 29px;
    font-size: 11px;
    letter-spacing: 0;
    color: #fff;
}
```
